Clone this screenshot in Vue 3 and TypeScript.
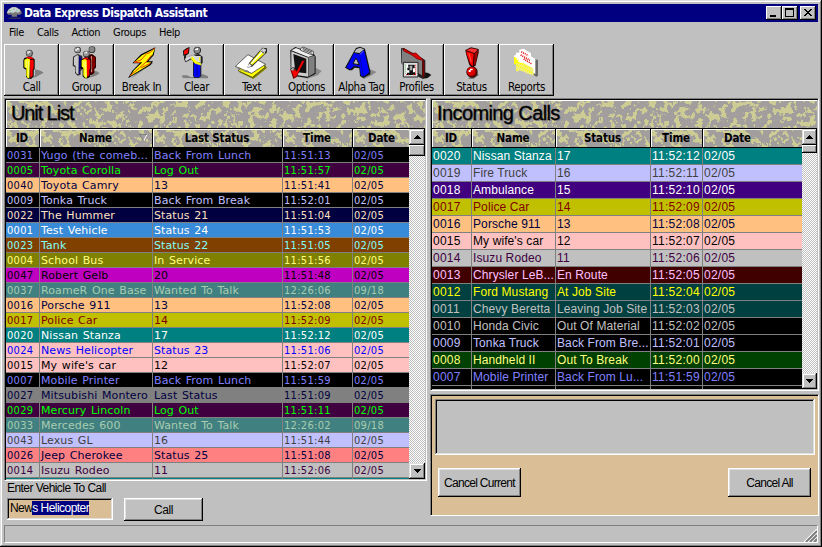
<script setup lang="ts">
interface Tool { label: string; origin: number }
type Row = [bg: string, fg: string, id: string, name: string, status: string, time: string, date: string]

const tools: Tool[] = [
  { label: 'Call', origin: 15 },
  { label: 'Group', origin: 180 },
  { label: 'Break In', origin: 345 },
  { label: 'Clear', origin: 510 },
  { label: 'Text', origin: 675 },
  { label: 'Options', origin: 30 },
  { label: 'Alpha Tag', origin: 195 },
  { label: 'Profiles', origin: 360 },
  { label: 'Status', origin: 525 },
  { label: 'Reports', origin: 690 },
]
const menus = ['File', 'Calls', 'Action', 'Groups', 'Help']

const units: Row[] = [
  ['#000000', '#8080ff', '0031', 'Yugo (the comeb...', 'Back From Lunch', '11:51:13', '02/05'],
  ['#400040', '#00ff00', '0005', 'Toyota Corolla', 'Log Out', '11:51:57', '02/05'],
  ['#ffc080', '#000040', '0040', 'Toyota Camry', '13', '11:51:41', '02/05'],
  ['#000000', '#c0c0ff', '0009', 'Tonka Truck', 'Back From Break', '11:52:01', '02/05'],
  ['#000040', '#ffe0c0', '0022', 'The Hummer', 'Status 21', '11:51:04', '02/05'],
  ['#378bd8', '#ffffff', '0001', 'Test Vehicle', 'Status 24', '11:51:53', '02/05'],
  ['#804000', '#80ffff', '0023', 'Tank', 'Status 22', '11:51:05', '02/05'],
  ['#808000', '#ffff80', '0004', 'School Bus', 'In Service', '11:51:56', '02/05'],
  ['#c000c0', '#000000', '0047', 'Robert Gelb', '20', '11:51:48', '02/05'],
  ['#408080', '#a9ccb0', '0037', 'RoameR One Base', 'Wanted To Talk', '12:26:06', '09/18'],
  ['#ffc080', '#000040', '0016', 'Porsche 911', '13', '11:52:08', '02/05'],
  ['#c0c000', '#800000', '0017', 'Police Car', '14', '11:52:09', '02/05'],
  ['#008080', '#ffffff', '0020', 'Nissan Stanza', '17', '11:52:12', '02/05'],
  ['#ffc0c0', '#0000ff', '0024', 'News Helicopter', 'Status 23', '11:51:06', '02/05'],
  ['#ffc0c0', '#000000', '0015', "My wife's car", '12', '11:52:07', '02/05'],
  ['#000000', '#8080ff', '0007', 'Mobile Printer', 'Back From Lunch', '11:51:59', '02/05'],
  ['#808080', '#000040', '0027', 'Mitsubishi Montero', 'Last Status', '11:51:09', '02/05'],
  ['#400040', '#00ff00', '0029', 'Mercury Lincoln', 'Log Out', '11:51:11', '02/05'],
  ['#408080', '#a9ccb0', '0033', 'Mercedes 600', 'Wanted To Talk', '12:26:02', '09/18'],
  ['#c0c0ff', '#404040', '0043', 'Lexus GL', '16', '11:51:44', '02/05'],
  ['#ff8080', '#000040', '0026', 'Jeep Cherokee', 'Status 25', '11:51:08', '02/05'],
  ['#c0c0c0', '#400040', '0014', 'Isuzu Rodeo', '11', '11:52:06', '02/05'],
  ['#008080', '#ffffff', '', '', '', '', ''],
]
const calls: Row[] = [
  ['#008080', '#ffffff', '0020', 'Nissan Stanza', '17', '11:52:12', '02/05'],
  ['#c0c0ff', '#404040', '0019', 'Fire Truck', '16', '11:52:11', '02/05'],
  ['#400080', '#ffffff', '0018', 'Ambulance', '15', '11:52:10', '02/05'],
  ['#c0c000', '#800000', '0017', 'Police Car', '14', '11:52:09', '02/05'],
  ['#ffc080', '#000040', '0016', 'Porsche 911', '13', '11:52:08', '02/05'],
  ['#ffc0c0', '#000000', '0015', "My wife's car", '12', '11:52:07', '02/05'],
  ['#c0c0c0', '#400040', '0014', 'Isuzu Rodeo', '11', '11:52:06', '02/05'],
  ['#400000', '#ffc0ff', '0013', 'Chrysler LeB...', 'En Route', '11:52:05', '02/05'],
  ['#004040', '#ffff00', '0012', 'Ford Mustang', 'At Job Site', '11:52:04', '02/05'],
  ['#004040', '#c0c0c0', '0011', 'Chevy Beretta', 'Leaving Job Site', '11:52:03', '02/05'],
  ['#000000', '#c0c0c0', '0010', 'Honda Civic', 'Out Of Material', '11:52:02', '02/05'],
  ['#000000', '#c0c0ff', '0009', 'Tonka Truck', 'Back From Bre...', '11:52:01', '02/05'],
  ['#004000', '#ffff80', '0008', 'Handheld II', 'Out To Break', '11:52:00', '02/05'],
  ['#000000', '#8080ff', '0007', 'Mobile Printer', 'Back From Lu...', '11:51:59', '02/05'],
  ['#000000', '#8080ff', '', '', '', '', ''],
]
const panels = [
  { key: 'units', title: 'Unit List', cols: ['ID', 'Name', 'Last Status', 'Time', 'Date'], rows: units },
  { key: 'calls', title: 'Incoming Calls', cols: ['ID', 'Name', 'Status', 'Time', 'Date'], rows: calls },
]
</script>

<template>
  <div class="window">
    <svg class="defs" width="0" height="0">
      <filter id="marble" x="0" y="0" width="100%" height="100%" color-interpolation-filters="sRGB">
        <feTurbulence type="fractalNoise" baseFrequency="0.17 0.15" numOctaves="5" seed="11" />
        <feColorMatrix values="0 0 0 0 .8  0 0 0 0 .8  0 0 0 0 .58  16 16 0 0 -16.7" />
      </filter>
    </svg>

    <header class="titlebar">
      <svg class="app-icon" width="16" height="14" viewBox="18 22 48 42">
        <path d="M26 57H62V60H26Z" fill="#444" />
        <path d="M20 42L26 32L36 25H48L60 32L66 43L60 48H51V54H35V48H24Z" fill="#777" />
        <path d="M21 41L27 32L37 26H47L59 33L61 38L54 42L46 39L38 44L30 41L24 44Z" fill="#d0d0d0" />
        <path d="M28 34H32V37H28ZM39 30H43V33H39ZM49 35H53V38H49ZM35 39H38V42H35Z" fill="#50c8a0" />
      </svg>
      <span class="caption">Data Express Dispatch Assistant</span>
      <span class="win-btns">
        <button class="wb"><svg width="12" height="10" shape-rendering="crispEdges"><path d="M2 7H8V9H2Z" /></svg></button>
        <button class="wb"><svg width="12" height="10" shape-rendering="crispEdges"><path d="M1 0H10V9H1ZM2 2V8H9V2Z" fill-rule="evenodd" /></svg></button>
        <button class="wb close"><svg width="12" height="10" shape-rendering="crispEdges"><path d="M2 1H4V2H5V3H7V2H8V1H10V2H9V3H8V4H7V5H8V6H9V7H10V8H8V7H7V6H5V7H4V8H2V7H3V6H4V5H5V4H4V3H3V2H2Z" /></svg></button>
      </span>
    </header>

    <nav class="menu"><span v-for="m in menus" :key="m">{{ m }}</span></nav>

    <div class="toolbar">
      <button v-for="(t, i) in tools" :key="t.label" class="tool">
        <svg width="53" height="34" :viewBox="`${t.origin} 135 159 102`">
          <g v-if="i === 0">
            <path d="M105 208L122 212L131 218L120 224L108 231L95 235L105 226Z" fill="#808080" />
            <path d="M73 174L85 170H94L104 178V207L101 210V229L94 236H84L78 230V209L70 204V181Z" fill="#000" />
            <path d="M73 179L82 175L90 178L88 234H83L79 227V205L73 202Z" fill="#ff0" />
            <path d="M90 179L101 179V205L98 209V228L91 233Z" fill="#f00" />
            <path d="M77 172L91 169L102 176L89 177Z" fill="#f00" />
            <path d="M79 182V204M86 183V231" stroke="#fff" stroke-width="1.5" />
            <circle cx="88" cy="160" r="10.5" fill="#333" /><circle cx="87.5" cy="159.5" r="8.5" fill="#888" /><path d="M82 154H88V153H91V158H86V161H82Z" fill="#eee" />
          </g>
          <g v-else-if="i === 1">
            <path d="M277 211L290 214L299 220L287 227L267 234L276 225Z" fill="#808080" />
            <path d="M219 170L233 162L247 168V207L242 214V224L233 227L225 219V202L218 197Z" fill="#333" />
            <path d="M222 172L232 165L236 169V222H231L227 216V198L222 194Z" fill="#c8c8c8" />
            <path d="M237 169L244 171V204L239 207V222H236Z" fill="#000080" />
            <path d="M262 166L276 162L288 171V203L283 207V219L274 226L264 220Z" fill="#300" />
            <path d="M273 169L285 171V200L280 205V217L273 221Z" fill="#800000" /><path d="M274 168V216" stroke="#e0a080" stroke-width="3" />
            <circle cx="233" cy="150" r="10" fill="#333" /><circle cx="232.5" cy="149.5" r="8" fill="#999" />
            <circle cx="276" cy="149" r="10" fill="#333" /><circle cx="275.5" cy="148.5" r="8" fill="#888" />
            <path d="M243 179L257 170L274 179V207L271 211V229L264 235H254L248 229V208L242 204Z" fill="#000" />
            <path d="M245 181L255 176L261 180V233H255L250 226V203L245 200Z" fill="#ff0" />
            <path d="M260 180H271V206L268 209V226L261 231ZM247 177L259 172L270 179Z" fill="#f00" />
            <path d="M252 184V203M257 184V231" stroke="#fff" stroke-width="1.5" />
            <circle cx="259" cy="162" r="10" fill="#333" /><circle cx="258.5" cy="161" r="8" fill="#999" />
            <path d="M226 148H231V144H236V149H230V153H226ZM252 158H257V155H261V160H252Z" fill="#fff" />
          </g>
          <g v-else-if="i === 2">
            <path d="M391 237L460 189L449 190L429 209L418 211Z" fill="#888" />
            <path d="M466 142L423 163L397 190H419L397 212L384 235L452 195L459 184H445L461 166Z" fill="#000" />
            <path d="M464 146L426 166L403 187H427L402 211L390 229L447 194L453 187H437L457 166Z" fill="#ff0" />
            <path d="M464 144L450 158L440 161L423 180L402 187H421M455 165L438 186L419 203L390 227M451 190L424 203" fill="none" stroke="#e84000" stroke-width="3" />
          </g>
          <g v-else-if="i === 3">
            <path d="M546 226H562L572 231H582V225L610 223L624 229V235H575L548 234Z" fill="#808080" />
            <path d="M549 152L560 144L569 141L567 160L558 167H550Z" fill="#111" /><path d="M552 153L566 144L564 158L558 163H552Z" fill="#f00" />
            <path d="M552 167V178L557 187L574 178L579 184V227L583 234H597L604 228V193L608 188V170L597 162L581 164L565 170L558 178V166Z" fill="#222" />
            <path d="M554 177L565 170L580 165L588 168L602 168V190L588 194L579 181L573 175L558 184Z" fill="#d8d8d8" />
            <path d="M582 187H601V228L595 232H584L581 226Z" fill="#00f" /><path d="M591 193V229" stroke="#000060" stroke-width="2" />
            <path d="M577 170L589 185L602 190V195L585 190L574 176Z" fill="#ff0" stroke="#ff0" stroke-width="2" /><path d="M599 172V182" stroke="#ff0" stroke-width="3" />
            <circle cx="592" cy="151" r="11" fill="#222" /><circle cx="591.5" cy="150.5" r="8.5" fill="#888" /><path d="M585 147H590V144H594V150H585Z" fill="#fff" />
          </g>
          <g v-else-if="i === 4">
            <path d="M718 217L760 237L801 204L792 190L763 180Z" fill="#808000" />
            <path d="M714 212L757 232L796 201L785 190L747 180Z" fill="#ff0" stroke="#222" stroke-width="2" />
            <path d="M706 199L744 164L797 193L755 220Z" fill="#fff" stroke="#222" stroke-width="2" />
            <path d="M708 200L721 204L722 213L742 211L755 221L718 210Z" fill="#777" />
            <path d="M742 203L747 189L787 143L801 145V157L756 200Z" fill="#222" />
            <path d="M750 190L784 150L796 159L757 195Z" fill="#ff0" /><path d="M754 191L789 153" stroke="#fff" stroke-width="4" />
            <path d="M780 153L789 144L799 149L792 162Z" fill="#ccc" /><path d="M742 203L747 190L756 198Z" fill="#eee" /><path d="M784 154L793 160" stroke="#444" stroke-width="3" />
          </g>
          <g v-else-if="i === 5">
            <path d="M137 203L155 213L143 226L112 236L105 231L138 223Z" fill="#888" />
            <path d="M61 151L76 141L132 162L137 170V222L111 234L77 229L62 209Z" fill="#111" />
            <path d="M64 151L78 144L131 165L115 171Z" fill="#eee" /><path d="M115 171L134 167V219L115 230Z" fill="#808080" />
            <path d="M64 154L114 173V230L78 225L64 208Z" fill="#ccc" /><path d="M70 162L109 176V220L76 216Z" fill="#111" />
            <path d="M91 146L99 141L130 154V164L119 162L92 151Z" fill="#eee" stroke="#111" stroke-width="2" />
            <path d="M98 149L125 160M98 145L126 156" stroke="#111" stroke-width="2" />
            <path d="M61 209L73 204L80 213L94 185L106 178L80 231L70 237Z" fill="#800000" /><path d="M64 210L71 205L80 216L97 183L102 184L79 227L73 232Z" fill="#f00" />
            <path d="M61 209L67 203H74L71 213" fill="#aaa" stroke="#111" stroke-width="2" />
          </g>
          <g v-else-if="i === 6">
            <path d="M298 207L320 216L301 228L282 237L269 229Z" fill="#888" />
            <path d="M225 203L252 154L258 144L270 140L285 146L301 214V223L280 234L270 227L268 205L254 203L246 211L238 211Z" fill="#111" />
            <path d="M253 157L259 148L270 143L282 148L269 159Z" fill="#bbb" />
            <path d="M268 161L282 150L298 217L281 230Z" fill="#0000ff" />
            <path d="M252 159L268 163L280 230L272 225L269 201L251 198L242 208L229 203Z" fill="#0000f0" />
            <path d="M258 174L268 194L249 191Z" fill="#c0c0c0" stroke="#111" stroke-width="3" /><path d="M269 164L281 153" stroke="#8080ff" stroke-width="2" />
          </g>
          <g v-else-if="i === 7">
            <path d="M462 217L475 219L484 225L473 234L459 236Z" fill="#111" />
            <path d="M393 145L401 144L456 174L466 181V228L459 237L445 230L394 190Z" fill="#222" />
            <path d="M396 148L456 179V226L396 191Z" fill="#808080" /><path d="M458 180L463 185V229L458 233Z" fill="#800000" />
            <path d="M401 145L426 160L438 159L462 182L442 177L424 164L401 153Z" fill="#d00" stroke="#600" stroke-width="2" />
            <path d="M400 187H444V231H400Z" fill="#ddd" stroke="#222" stroke-width="3" /><path d="M406 193H439V225H406Z" fill="#fff" />
            <path d="M414 194H434V205H429V217H436V225H411V218H418V211H412V203H416Z" fill="#111" /><path d="M419 197H427V211H419Z" fill="#aaa" />
            <path d="M407 194V222" stroke="#080" stroke-width="2" stroke-dasharray="3 3" /><path d="M437 194V222M408 224H416M429 224H438" stroke="#e00" stroke-width="3" stroke-dasharray="3 3" />
          </g>
          <g v-else-if="i === 8">
            <path d="M586 150L603 142L626 147V158L617 196L607 204L598 195L589 166Z" fill="#300" />
            <path d="M589 151L604 145L623 149L614 159Z" fill="#ff3030" /><path d="M589 154L611 161L608 199L601 192L591 165Z" fill="#f00" /><path d="M614 161L624 153L616 192L611 196Z" fill="#a00000" />
            <path d="M597 160L604 187" stroke="#ff8080" stroke-width="2" />
            <path d="M617 218L627 224L611 236H594Z" fill="#666" /><circle cx="606" cy="216" r="17" fill="#300" /><circle cx="605" cy="215" r="14" fill="#d00" /><path d="M596 210H600V206H608V211H602V216H596Z" fill="#fff" /><path d="M616 206V221L608 228H602" fill="none" stroke="#800000" stroke-width="3" />
          </g>
          <g v-else>
            <path d="M790 176L804 180V226L799 231L788 222Z" fill="#666" />
            <path d="M732 167H742L791 204V224L747 210L738 213V194L732 191Z" fill="#ff0" />
            <path d="M731 168L738 164V158H748V149L761 146L783 160V169L796 177V222L789 218L785 203L761 190L747 188Z" fill="#fff" />
            <path d="M745 190L765 193L790 205V225L773 221L747 208V214H738V190Z" fill="#f0ee80" />
            <path d="M754 155L775 167M752 165L780 181M761 177L784 191" stroke="#e00000" stroke-width="5" stroke-dasharray="3 3" />
            <path d="M733 173L746 183M735 181L783 208M740 195L788 220M740 210H746" stroke="#ff0" stroke-width="6" stroke-dasharray="3 3" />
          </g>
        </svg>
        <span>{{ t.label }}</span>
      </button>
    </div>

    <main class="body">
      <section v-for="p in panels" :key="p.key" class="side" :class="p.key">
        <div class="list">
          <h1 class="band">
            <svg class="tex" width="100%" height="100%"><rect width="100%" height="100%" filter="url(#marble)" /></svg>
            <span>{{ p.title }}</span>
          </h1>
          <div class="table">
            <div class="grid">
              <div class="cols head">
                <div v-for="c in p.cols" :key="c" class="th">
                  <svg class="tex" width="100%" height="100%"><rect width="100%" height="100%" filter="url(#marble)" /></svg>
                  <span>{{ c }}</span>
                  <svg v-if="p.key === 'units' && c === 'Name'" class="sort" width="9" height="8"><path d="M.5 .5H8.5L4.5 7.5Z" fill="#a39e9e" /><path d="M8 .5L4.5 7" stroke="#fff" /><path d="M8 .5H.5L4.5 7" fill="none" stroke="#808080" /></svg>
                </div>
              </div>
              <div v-for="(r, i) in p.rows" :key="i" class="cols row" :style="{ background: r[0], color: r[1] }">
                <div v-for="n in 5" :key="n" class="td" :class="{ words: n === 2 || n === 3 }">{{ r[n + 1] }}</div>
              </div>
            </div>
            <div class="scroll">
              <button class="sb"><svg width="7" height="4" shape-rendering="crispEdges"><path d="M3 0H4V1H5V2H6V3H7V4H0V3H1V2H2V1H3Z" /></svg></button>
              <div class="thumb"></div>
              <button class="sb down"><svg width="7" height="4" shape-rendering="crispEdges"><path d="M0 0H7V1H6V2H5V3H4V4H3V3H2V2H1V1H0Z" /></svg></button>
            </div>
          </div>
        </div>

        <div v-if="p.key === 'units'" class="entry">
          <label>Enter Vehicle To Call</label>
          <div class="entry-row">
            <div class="field"><span>New</span><mark>s Helicopter</mark></div>
            <button class="btn call">Call</button>
          </div>
        </div>
        <div v-else class="cancel">
          <div class="log"></div>
          <div class="cancel-row">
            <button class="btn">Cancel Current</button>
            <button class="btn">Cancel All</button>
          </div>
        </div>
      </section>
    </main>

    <footer class="status">
      <svg width="13" height="13" viewBox="0 0 13 13"><path d="M0 13L13 0M4 13L13 4M8 13L13 8" stroke="#fff" stroke-width="1.2" /><path d="M2 13L13 2M6 13L13 6M10 13L13 10" stroke="#808080" stroke-width="2" /></svg>
    </footer>
  </div>
</template>

<style>
body { margin: 0; overflow: hidden; }
</style>

<style scoped>
* { box-sizing: border-box; }
.window {
  width: 822px; height: 547px; padding: 4px; background: #c0c0c0; color: #000; display: flex; flex-direction: column;
  font: 12px/14px "Liberation Sans", Arial, sans-serif; letter-spacing: -.55px; white-space: nowrap; overflow: hidden;
  box-shadow: inset -1px -1px #000, inset 1px 1px #dfdfdf, inset -2px -2px #808080, inset 2px 2px #fff;
}
.defs { position: absolute; }
button { font: inherit; letter-spacing: inherit; color: inherit; margin: 0; padding: 0; background: #c0c0c0; border: 0; border-radius: 0; }
.titlebar { height: 18px; flex: none; background: #000080; color: #fff; display: flex; align-items: center; width: 814px; padding-left: 2px; }
.caption { margin-left: 2px; font: bold 12px/18px "DejaVu Sans Condensed", "DejaVu Sans", sans-serif; font-stretch: condensed; letter-spacing: -.46px; }
.win-btns { margin-left: auto; padding-right: 2px; display: flex; }
.wb { width: 16px; height: 14px; padding: 2px; display: flex; box-shadow: inset -1px -1px #000, inset 1px 1px #fff, inset -2px -2px #808080; }
.wb svg { display: block; flex: none; }
.close { margin-left: 2px; }
.menu { height: 22px; flex: none; display: flex; gap: 13px; padding-left: 5px; font: 11px/21px "DejaVu Sans Condensed", "DejaVu Sans", sans-serif; font-stretch: condensed; letter-spacing: -.4px; }
.toolbar { display: flex; height: 52px; flex: none; }
.tool {
  width: 55px; height: 52px; padding: 1px; display: flex; flex-direction: column; align-items: center;
  box-shadow: inset -1px -1px #000, inset 1px 1px #fff, inset -2px -2px #808080;
  font: 11.5px/14px "DejaVu Sans Condensed", "DejaVu Sans", sans-serif; font-stretch: condensed; letter-spacing: -.4px;
}
.tool svg { display: block; flex: none; }
.tool span { margin-top: 1px; }
.body { display: flex; gap: 3px; margin-top: 2px; height: 418px; flex: none; }
.units.side { width: 423px; }
.calls.side { width: 389px; }
.list, .cancel { border: 1px solid; border-color: #808080 #fff #fff #808080; padding: 1px; background: linear-gradient(#000, #000) 0 0 / 100% 1px no-repeat, linear-gradient(#000, #000) 0 0 / 1px 100% no-repeat, #c0c0c0; }
.units .list { height: 383px; }
.calls .list { height: 293px; }
.band { margin: 0; height: 28px; position: relative; background: #a39e9e; box-shadow: inset 1px 1px #fff; font: 20px/27px "Liberation Sans", Arial, sans-serif; padding-left: 5px; -webkit-text-stroke: .3px #000; text-shadow: 1px 1px #808080; }
.units .band { letter-spacing: -1.1px; }
.calls .band { letter-spacing: -.6px; }
.band span, .th span { position: relative; }
.tex { position: absolute; inset: 1px 0 0 1px; width: calc(100% - 1px); height: calc(100% - 1px); display: block; }
.table { display: flex; border-top: 1px solid #000; overflow: hidden; }
.units .table { height: 351px; }
.calls .table { height: 261px; }
.grid { flex: 1; min-width: 0; overflow: hidden; }
.cols { display: grid; }
.units .cols { grid-template-columns: 34px 113px 130px 70px 56px; }
.calls .cols { grid-template-columns: 40px 84px 95px 52px 99px; }
.head { height: 19px; background: #000; border-bottom: 1px solid #000; }
.th { position: relative; background: #a39e9e; border: solid #fff; border-width: 1px 0 0 1px; margin-right: 1px; padding-right: 2px; text-align: center; font: bold 11.5px/17px "DejaVu Sans Condensed", "DejaVu Sans", sans-serif; font-stretch: condensed; letter-spacing: -.15px; }
.th:last-child { margin-right: 0; padding-right: 0; }
.calls .th:last-child { padding-right: 31px; }
.th .tex { inset: 0; width: 100%; height: 100%; }
.sort { position: absolute; right: 4px; top: 4px; }
.row { overflow: hidden; border-bottom: 1px solid #808080; }
.units .row { height: 15px; font: 11px/15px "DejaVu Sans Condensed", "DejaVu Sans", sans-serif; font-stretch: condensed; letter-spacing: .3px; }
.units .words { font-family: "DejaVu Sans", sans-serif; font-stretch: normal; letter-spacing: .1px; word-spacing: 1px; }
.calls .row { height: 17px; font: 12px/17px "Liberation Sans", Arial, sans-serif; letter-spacing: .25px; }
.calls .words { letter-spacing: .1px; }
.td { padding-left: 1px; border-right: 1px solid #808080; overflow: hidden; }
.td:last-child { border-right: 0; }
.scroll { display: flex; flex-direction: column; background: repeating-conic-gradient(#fff 0 25%, #c0c0c0 0 50%) 0 0 / 2px 2px; }
.units .scroll { width: 16px; }
.calls .scroll { width: 15px; }
.sb { height: 16px; flex: none; display: flex; align-items: center; justify-content: center; box-shadow: inset -1px -1px #000, inset 1px 1px #dfdfdf, inset -2px -2px #808080, inset 2px 2px #fff; }
.thumb { height: 11px; background: #c0c0c0; box-shadow: inset -1px -1px #000, inset 1px 1px #fff, inset -2px -2px #808080; }
.calls .thumb { height: 8px; }
.down { margin-top: auto; }
.entry { padding: 0 0 0 3px; }
.entry label { display: block; height: 17px; line-height: 14px; }
.entry-row { display: flex; gap: 11px; }
.field { width: 106px; height: 22px; background: #d9be96; padding: 3px 0 0 3px; display: flex; line-height: 14px; box-shadow: inset -1px -1px #fff, inset 1px 1px #808080, inset -2px -2px #dfdfdf, inset 2px 2px #000; }
.field mark { background: #000080; color: #fff; height: 14px; }
.btn { width: 83px; height: 29px; display: flex; align-items: center; justify-content: center; box-shadow: inset -1px -1px #000, inset 1px 1px #fff, inset -2px -2px #808080, inset 2px 2px #dfdfdf; letter-spacing: -.7px; }
.btn.call { width: 79px; height: 23px; letter-spacing: -.4px; }
.cancel { margin-top: 3px; height: 122px; background-color: #d9be96; padding: 4px 3px 0 4px; }
.log { height: 56px; background: #c0c0c0; box-shadow: inset -1px -1px #fff, inset 1px 1px #808080, inset -2px -2px #dfdfdf, inset 2px 2px #000; }
.cancel-row { display: flex; justify-content: space-between; padding: 13px 4px 0 3px; }
.status { margin-top: 9px; height: 18px; flex: none; width: 814px; border: 1px solid; border-color: #808080 #fff #fff #808080; display: flex; justify-content: flex-end; align-items: flex-end; }
</style>
